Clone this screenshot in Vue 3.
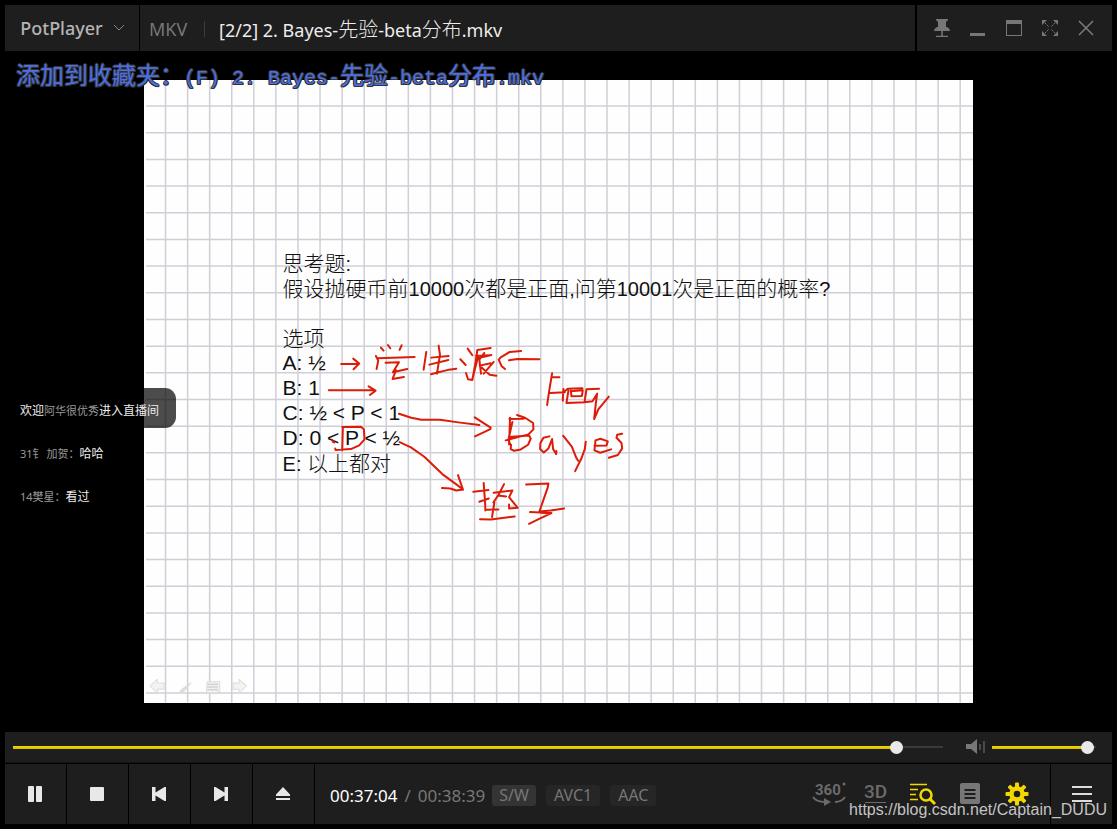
<script setup>
import { ref, computed } from 'vue'

const position = ref(889)
const volume = ref(98)
const seekFill = computed(() => ({ '--fill': (position.value / 930) * 100 + '%' }))
const volumeFill = computed(() => ({ '--fill': volume.value + '%' }))

const columns = Array.from({ length: 37 }, (_, i) => 21.5 + i * 22.05)
const rows = Array.from({ length: 23 }, (_, i) => 26 + i * 26.65)

const question = [
  { cjk: '假设抛硬币前' },
  { latin: '10000' },
  { cjk: '次都是正面' },
  { latin: ',' },
  { cjk: '问第' },
  { latin: '10001' },
  { cjk: '次是正面的概率' },
  { latin: '?' }
]
</script>

<template>
  <main class="player">
    <header class="titlebar">
      <button class="brand">
        PotPlayer
        <svg width="12" height="8" viewBox="0 0 12 8"><path d="M1 1l5 5 5-5" fill="none" stroke="#858585" /></svg>
      </button>
      <div class="file">
        <span class="format">MKV</span>
        <h1>[2/2] 2. Bayes-<span class="han">先验</span>-beta<span class="han">分布</span>.mkv</h1>
      </div>
      <nav class="window-buttons">
        <button aria-label="Pin">
          <svg width="16" height="18" viewBox="0 0 16 18">
            <path d="M2 0h12v1l-2 2v5c2 0 4 2 4 4H0c0-2 2-4 4-4V3L2 1z" fill="#777" />
            <path d="M8 12v5M2 17.500h12" stroke="#777" stroke-width="1.500" />
          </svg>
        </button>
        <button aria-label="Minimize">
          <svg width="16" height="18" viewBox="0 0 16 18"><path d="M0 14h15v3H0z" fill="#777" /></svg>
        </button>
        <button aria-label="Maximize">
          <svg width="16" height="18" viewBox="0 0 16 18">
            <path d="M0 1h16v16H0zM1 5v11h14V5z" fill="#777" fill-rule="evenodd" />
          </svg>
        </button>
        <button aria-label="Full screen">
          <svg width="16" height="18" viewBox="0 0 16 18">
            <path d="M0 1h5L0 6zM11 1h5v5zM0 12l5 5H0zM16 12v5h-5z" fill="#777" />
            <path d="M3 4l4 4M13 4L9 8M3 14l4-4M13 14l-4-4" stroke="#777" stroke-dasharray="2 1" />
          </svg>
        </button>
        <button aria-label="Close">
          <svg width="16" height="18" viewBox="0 0 16 18"><path d="M1 2l14 14M15 2L1 16" stroke="#7c7c7c" stroke-width="1.500" /></svg>
        </button>
      </nav>
    </header>

    <section class="screen">
      <p class="osd"><span class="han">添加到收藏夹：</span>(F) 2. Bayes-<span class="han">先验</span>-beta<span class="han">分布</span>.mkv</p>

      <div class="frame">
        <article class="slide">
          <svg class="layer" viewBox="0 0 829 622" stroke="#cfcfd8" stroke-width="1.500">
            <line v-for="x in columns" :key="'c' + x" :x1="x" y1="0" :x2="x" y2="622" />
            <line v-for="y in rows" :key="'r' + y" x1="2" :y1="y" x2="828" :y2="y" />
          </svg>

          <div class="text">
            <p>思考题<span class="latin">:</span></p>
            <p>
              <template v-for="(part, i) in question" :key="i"><span v-if="part.latin" class="latin">{{ part.latin }}</span><template v-else>{{ part.cjk }}</template></template>
            </p>
            <br />
            <p>选项</p>
            <p class="option">A: ½</p>
            <p class="option">B: 1</p>
            <p class="option">C: ½ &lt; P &lt; 1</p>
            <p class="option">D: 0 &lt; P &lt; ½</p>
            <p><span class="latin">E: </span>以上都对</p>
          </div>

          <svg class="layer" viewBox="144 80 829 622" fill="none" stroke="#dc1c08" stroke-linecap="round" stroke-linejoin="round">
            <g transform="translate(270 240) scale(.3333)" stroke-width="6">
              <path d="M213 371h50M249 355l18 15-17 17" />
              <path d="M317 347l7 14-5 25M322 354l111-4M332 322l8 9M353 314l7 10M394 315l-6 14" />
              <path d="M346 367l40-1-18 30 43-10M377 390l-10 26 34-6" />
              <path d="M468 335l-8 53M483 352l52-5M505 316l4 28-9 56M477 373l57-14M482 402l54-14 22-3" />
              <path d="M570 357l16 17M592 325l14 20M587 398l6 19 13 2 10-55 5-35 40-6M606 417l17-67M617 346l40-1M642 338l-15 20 5 42M618 355l45-11M661 369l-33 7 30 27 20 3M640 400l30-35" />
              <path d="M752 332l-34 3-27 16-6 7 9 20 10 8M716 360l25-4 66 1" />
            </g>
            <g transform="translate(270 330) scale(.3333)" stroke-width="6">
              <path d="M176 180h134M295 168l21 13-17 13" />
              <path d="M386 250l37 12 30 6h56l55 8 63 8M613 261l48 31-1 4-46 22" />
              <path d="M218 290l-2 70M216 290l56-1 9 8 2 30-16 18-25 11-46 3-1-5" />
              <path d="M187 334l6 3M185 327l6 8" stroke-width="5" />
              <path d="M388 335l34 16 40 28 54 52 42 31 20 15M563 434l15 44M515 473l25 1 18 6 20-3" />
            </g>
            <g transform="translate(440 330) scale(.3333)" stroke-width="6">
              <path d="M335 129l-8 48-7 47M335 140l22 1M330 188l43-2M369 176l-2 35M370 185l12-10 44-1M384 181l-6 37 58-2M391 181l2 17 31-1 3-17-36 3M476 175l-38 2-6 39 24-3 14-23-4 30-5 46 13-30 31-37" />
              <path d="M209 262l-3 80M207 266l42-1M230 254l25 9 23 15 1 19-15 15-68 18M216 275l-12 53 5 13M206 320l60-5 5 10-8 18-22 14-20 4-10-5 1-13" />
              <path d="M327 318l-18 4-9 16-1 18 11 10 14-12 11-28 3 30 9 15 1-9" />
              <path d="M368 316l26 33 13 32 6 10M436 334l-3 22-11 30-18 36" />
              <path d="M462 346l36-1 4-12-22-8-15 5-3 30 17 7 33-10M545 310l-15 3-2 9 15 16 2 16-13 20-27 8" />
              <path d="M99 484l45-5M130 458l4 56 1 26M117 514l28-10M137 538l37-1M162 516l-7 44M119 566l33 1 71-9M160 487l56-7M191 461l-16 31-16 24M216 480l-10 20 26 32-26 2v-12M173 495l24 3" />
              <path d="M257 462l67-3-2 12-25 72 34-3 40-6M269 545l30 1M301 547l32 1-40 19-27 13" />
            </g>
            <g transform="translate(130 640) scale(.3333)" fill="#f3f3f1" stroke="#dcdcdc" stroke-width="3">
              <path d="M60 136l22-20v11h20v19H82v11z" />
              <path d="M349 136l-22-20v11h-18v19h18v11z" />
              <path d="M147 158l8-12 28-19-22 25z" fill="#dcdcdc" />
              <path d="M231 123h38v29l-10 4h-30z" />
              <path d="M233 131h30M233 139h30M233 147h30" stroke="#c4c4c4" />
            </g>
          </svg>
        </article>

        <ul class="chat">
          <li>欢迎<b>阿华很优秀</b>进入直播间</li>
          <li><b>31钅 加贺：</b>哈哈</li>
          <li><b>14樊星：</b>看过</li>
        </ul>
      </div>
    </section>

    <section class="seekbar">
      <input v-model.number="position" class="slider seek" type="range" min="0" max="930" aria-label="Position" :style="seekFill" />
      <button class="mute" aria-label="Mute">
        <svg width="20" height="16" viewBox="0 0 20 16">
          <path d="M0 5h5l6-5v15l-6-5H0z" fill="#777" />
          <path d="M14 5v6M18 2v12" stroke="#777" />
        </svg>
      </button>
      <input v-model.number="volume" class="slider volume" type="range" min="0" max="100" aria-label="Volume" :style="volumeFill" />
    </section>

    <footer class="controls">
      <button class="key" aria-label="Pause">
        <svg width="14" height="16" viewBox="0 0 14 16" fill="#e8e8e8"><rect width="6" height="16" rx="1" /><rect x="8" width="6" height="16" rx="1" /></svg>
      </button>
      <button class="key" aria-label="Stop">
        <svg width="14" height="14" viewBox="0 0 14 14" fill="#e8e8e8"><rect width="14" height="14" rx="1" /></svg>
      </button>
      <button class="key" aria-label="Previous">
        <svg width="14" height="14" viewBox="0 0 14 14" fill="#e8e8e8"><path d="M0 0h3.500v5.500L12.500 0H14v14h-1.500l-9-5.500V14H0z" /></svg>
      </button>
      <button class="key" aria-label="Next">
        <svg width="14" height="14" viewBox="0 0 14 14" fill="#e8e8e8"><path d="M14 0h-3.500v5.500L1.500 0H0v14h1.500l9-5.500V14H14z" /></svg>
      </button>
      <button class="key" aria-label="Open">
        <svg width="14" height="14" viewBox="0 0 14 14" fill="#e8e8e8"><path d="M7 0l7 7.500V9H0V7.500zM0 11h14v2H0z" /></svg>
      </button>
      <div class="status">
        <p class="time"><time>00:37:04</time><span>/</span><span>00:38:39</span></p>
        <button class="tag active">S/W</button>
        <button class="tag">AVC1</button>
        <button class="tag">AAC</button>
        <div class="tools">
          <button aria-label="360 degree view">
            <svg width="34" height="24" viewBox="0 0 34 24">
              <text x="3" y="13" font-size="15" font-weight="700" font-family="Roboto, sans-serif" fill="#6b6b6b">360</text>
              <circle cx="32" cy="2" r="1.500" fill="#6b6b6b" />
              <path d="M1 15c2 3 6 5 12 5M33 15c-2 3-5 5-10 5" fill="none" stroke="#6b6b6b" stroke-width="2" />
              <path d="M12 16l7 4-7 4z" fill="#6b6b6b" />
            </svg>
          </button>
          <button aria-label="3D">
            <svg width="28" height="24" viewBox="0 0 28 24">
              <text x="2" y="16" font-size="19" font-weight="500" font-family="Roboto, sans-serif" fill="#6b6b6b">3D</text>
              <path d="M3 20.500h21" stroke="#6b6b6b" />
            </svg>
          </button>
          <button aria-label="Browse playlist">
            <svg width="28" height="24" viewBox="0 0 28 24" fill="none" stroke="#f2d800">
              <path d="M1 2.500h17M1 7.500h8M1 12.500h6M1 17.500h8" stroke-width="1.500" />
              <circle cx="17" cy="13" r="5.500" stroke-width="2.500" />
              <path d="M21 17l5 5" stroke-width="3" />
            </svg>
          </button>
          <button aria-label="Subtitles">
            <svg width="20" height="22" viewBox="0 0 20 22">
              <rect width="20" height="21" rx="2" fill="#777" />
              <path d="M4.500 7h11M4.500 11h11M4.500 15h11" stroke="#1e1e1e" stroke-width="2" />
            </svg>
          </button>
          <button aria-label="Settings">
            <svg width="24" height="24" viewBox="-12 -12 24 24" fill="#f2d800">
              <rect v-for="n in 8" :key="n" x="-2" y="-11.500" width="4" height="6" rx="1" :transform="`rotate(${n * 45})`" />
              <circle r="5.500" fill="none" stroke="#f2d800" stroke-width="4.500" />
            </svg>
          </button>
        </div>
      </div>
      <button class="key menu" aria-label="Menu">
        <svg width="20" height="16" viewBox="0 0 20 16"><path d="M0 1h20M0 8h20M0 15h20" stroke="#dcdcdc" stroke-width="2" /></svg>
      </button>
    </footer>

    <a class="watermark" href="https://blog.csdn.net/Captain_DUDU">https://blog.csdn.net/Captain_DUDU</a>
  </main>
</template>

<style>
body {
  background: #000;
}
</style>

<style scoped>
* {
  box-sizing: border-box;
}
.player {
  position: relative;
  display: flex;
  flex-direction: column;
  min-height: 100vh;
  padding: 5px;
  background: #000;
  color: #ededed;
  font-family: "Noto Sans", "Noto Sans CJK SC", sans-serif;
}
p, h1, ul {
  margin: 0;
  padding: 0;
}
button {
  display: flex;
  align-items: center;
  justify-content: center;
  padding: 0;
  border: 0;
  background: none;
  color: inherit;
  font: inherit;
}
svg {
  display: block;
}
.titlebar {
  display: flex;
  height: 46px;
}
.titlebar > * {
  background: #1e1e1e;
}
.brand {
  gap: 10px;
  width: 134px;
  margin-right: 1px;
  padding: 0 0 0 1px;
  color: #b4b4b4;
  font-size: 18px;
  font-weight: 500;
}
.file {
  display: flex;
  flex: 1;
  align-items: center;
  margin-right: 2px;
  padding: 1px 9px 0;
}
.format {
  width: 56px;
  margin-right: 14px;
  border-right: 1px solid #3c3c3c;
  color: #777;
  font-size: 18px;
  line-height: 16px;
}
h1 {
  font-size: 18px;
  font-weight: 400;
}
h1 .han {
  font-family: "Noto Sans CJK SC", sans-serif;
  font-size: 20px;
  font-weight: 300;
}
.window-buttons {
  display: flex;
  justify-content: center;
  width: 195px;
  padding: 0 2px 1px 0;
}
.window-buttons button {
  width: 36px;
}
.screen {
  position: relative;
  display: flex;
  flex: 1;
  align-items: center;
}
.osd {
  position: absolute;
  z-index: 2;
  top: 13px;
  left: 11px;
  color: #4c70e4;
  font-family: "Liberation Mono", "Noto Sans CJK SC", monospace;
  font-size: 20px;
  line-height: 28px;
  white-space: nowrap;
  text-shadow: 1px 0 #333, -1px 0 #333, 0 1px #333, 0 -1px #333, 1px 1px #333, -1px 1px #333;
}
.osd .han {
  font-size: 24px;
}
.frame {
  position: relative;
  display: flex;
  justify-content: center;
  width: 100%;
  aspect-ratio: 16 / 9;
}
.slide {
  position: relative;
  height: 100%;
  aspect-ratio: 829 / 622;
  background: #fefefe;
}
.layer {
  position: absolute;
  inset: 0;
  width: 100%;
  height: 100%;
}
.text {
  position: relative;
  padding: 170px 0 0 139px;
  color: #111;
  font-family: "Noto Sans CJK SC", sans-serif;
  font-size: 21px;
  font-weight: 300;
  line-height: 25px;
  white-space: nowrap;
}
.text p {
  height: 25px;
}
.latin {
  font-family: "Liberation Sans", sans-serif;
  font-size: 20px;
  white-space: pre;
}
.option {
  font-family: "Liberation Sans", sans-serif;
}
.chat {
  position: absolute;
  top: 308px;
  left: 7px;
  display: flex;
  flex-direction: column;
  align-items: flex-start;
  gap: 3px;
  list-style: none;
  font-size: 12px;
}
.chat li {
  height: 40px;
  padding: 5px 17px 0 8px;
  border-radius: 11px;
  background: rgba(0, 0, 0, 0.7);
  line-height: 36px;
}
.chat b {
  color: #999;
  font-size: 11px;
  font-weight: 400;
}
.seekbar {
  display: flex;
  align-items: center;
  height: 31px;
  margin-bottom: 1px;
  padding: 0 16px 0 8px;
  border-bottom: 1px solid #141414;
  background: #1e1e1e;
}
.slider {
  height: 14px;
  margin: 0;
  appearance: none;
  background: linear-gradient(#f2d800, #d6bf00) 0 50% / var(--fill) 3px no-repeat, linear-gradient(#3a3a3a, #3a3a3a) 0 50% / 100% 2px no-repeat;
}
.slider::-webkit-slider-thumb {
  width: 13px;
  height: 13px;
  appearance: none;
  border-radius: 50%;
  background: #e9e9e9;
}
.seek {
  flex: 1;
}
.mute {
  margin: 0 6px 0 23px;
}
.volume {
  width: 104px;
}
.controls {
  display: flex;
  gap: 1px;
  height: 60px;
}
.controls > * {
  background: #1e1e1e;
}
.key {
  width: 61px;
  padding-right: 1px;
}
.menu {
  padding-right: 0;
}
.status {
  display: flex;
  flex: 1;
  align-items: center;
  padding: 2px 10px 0 15px;
  color: #777;
  font-size: 16px;
}
.time {
  display: flex;
  gap: 7px;
  margin-right: 7px;
  font-size: 17px;
}
.time time {
  color: #fff;
}
.tag {
  height: 21px;
  margin-right: 10px;
  padding: 0 8px;
  border-radius: 3px;
  background: #262626;
}
.tag.active {
  padding: 0 7px;
  background: #343434;
}
.tools {
  display: flex;
  align-items: center;
  margin-left: auto;
  padding-bottom: 3px;
}
.tools button {
  width: 47px;
}
.watermark {
  position: absolute;
  right: 10px;
  bottom: 9px;
  color: #c4c4c4;
  font-family: "Liberation Sans", sans-serif;
  font-size: 16px;
  line-height: 20px;
  text-decoration: none;
}
</style>
